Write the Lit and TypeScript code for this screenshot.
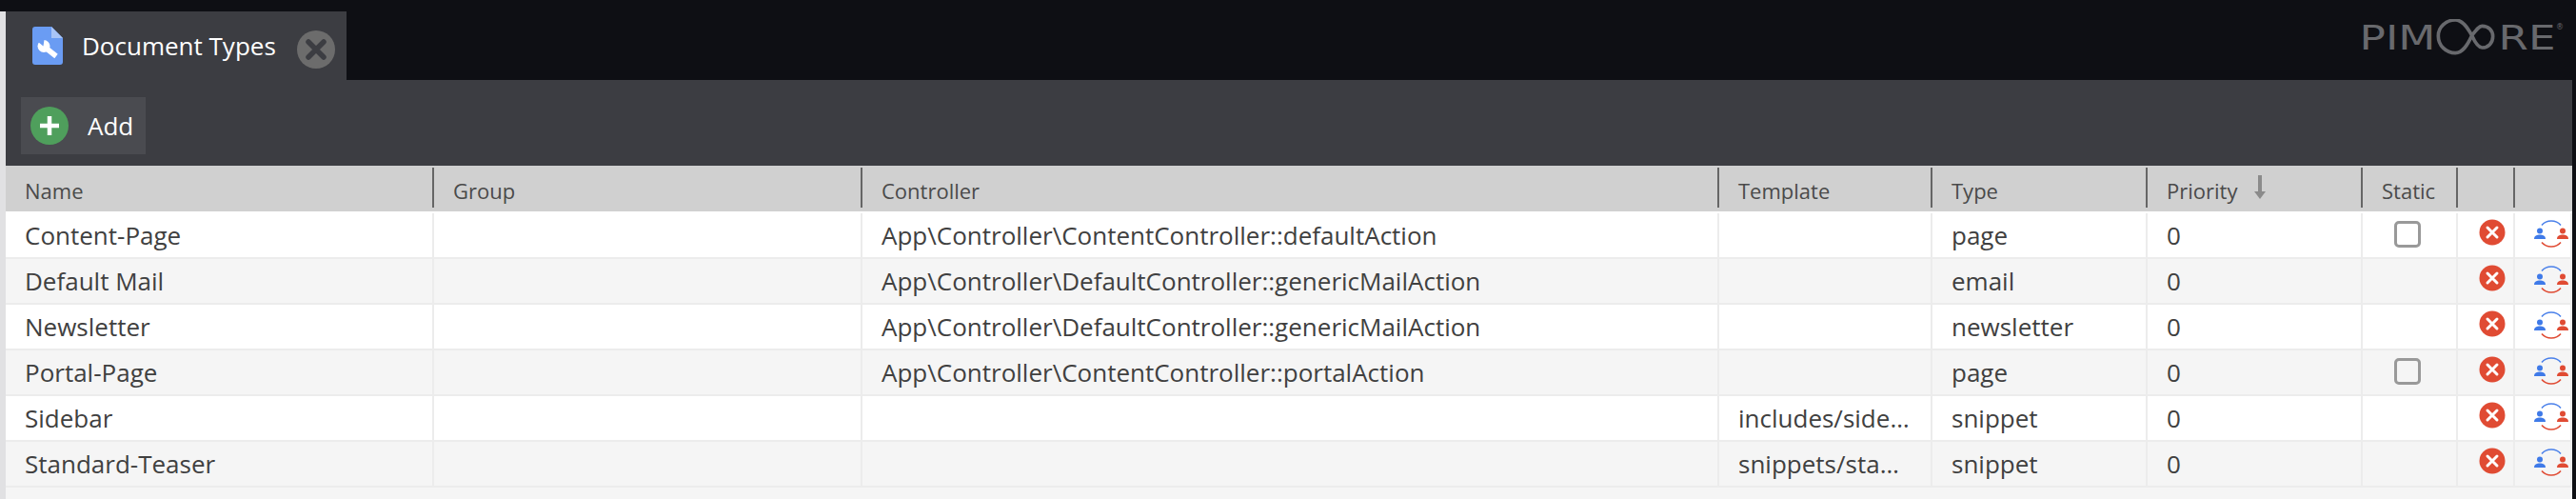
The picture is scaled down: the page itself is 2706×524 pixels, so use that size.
import { LitElement, html, css, svg } from "lit";
import { customElement } from "lit/decorators.js";

const rows = [
  { name: "Content-Page", controller: "App\\Controller\\ContentController::defaultAction", template: "", type: "page", stat: true },
  { name: "Default Mail", controller: "App\\Controller\\DefaultController::genericMailAction", template: "", type: "email", stat: false },
  { name: "Newsletter", controller: "App\\Controller\\DefaultController::genericMailAction", template: "", type: "newsletter", stat: false },
  { name: "Portal-Page", controller: "App\\Controller\\ContentController::portalAction", template: "", type: "page", stat: true },
  { name: "Sidebar", controller: "", template: "includes/sidebar.html", type: "snippet", stat: false },
  { name: "Standard-Teaser", controller: "", template: "snippets/standard-teaser.html", type: "snippet", stat: false },
];

const docIcon = html`<svg class="doc" width="32" height="40" viewBox="0 0 32 40">
  <path d="M3 0H20L32 12V37a3 3 0 0 1-3 3H3a3 3 0 0 1-3-3V3a3 3 0 0 1 3-3z" fill="#6a9cf3"/>
  <path d="M20 0L32 12H20z" fill="#a9c5f7"/>
  <circle cx="12" cy="20.5" r="6.5" fill="#fff"/>
  <path d="M13 21.5L25 31" stroke="#fff" stroke-width="5.5"/>
  <path d="M11.5 20.5L6 16 9 12.5 12.5 13.5z" fill="#6a9cf3"/>
</svg>`;

const closeIcon = html`<svg width="40" height="40" viewBox="0 0 40 40">
  <circle cx="20" cy="20" r="20" fill="#6c6c6c"/>
  <path d="M12 12L28 28M28 12L12 28" stroke="#3c3d42" stroke-width="5.5" stroke-linecap="round"/>
</svg>`;

const plusIcon = html`<svg width="40" height="40" viewBox="0 0 40 40">
  <circle cx="20" cy="20" r="20" fill="#4f9f5c"/>
  <path d="M20 10V30M10 20H30" stroke="#fff" stroke-width="4.5"/>
</svg>`;

const deleteIcon = html`<svg class="del" width="28" height="28" viewBox="0 0 28 28">
  <circle cx="14" cy="14" r="13.5" fill="#e04b33"/>
  <path d="M9 9L19 19M19 9L9 19" stroke="#fff" stroke-width="3" stroke-linecap="round"/>
</svg>`;

const swapIcon = html`<svg class="swap" width="38" height="32" viewBox="0 0 38 32">
  <path d="M8 6.5C13 0.5 23 0.5 28 6.5" fill="none" stroke="#4a80ea" stroke-width="1.6"/>
  <path d="M8 24.5C13 30.5 23 30.5 28 24.5" fill="none" stroke="#e04b33" stroke-width="1.6"/>
  <circle cx="6" cy="12.5" r="3" fill="#3f7ae8"/>
  <path d="M0 21C0 17.5 3 16.5 6 16.5S12 17.5 12 21z" fill="#3f7ae8"/>
  <circle cx="30" cy="12.5" r="3" fill="#e04b33"/>
  <path d="M24 21C24 17.5 27 16.5 30 16.5S36 17.5 36 21z" fill="#e04b33"/>
</svg>`;

const sortIcon = html`<svg class="sort" width="12" height="26" viewBox="0 0 12 26">
  <path d="M4 0H8V17H12L6 25 0 17H4z" fill="#8b8b8b"/>
</svg>`;

const logo = svg`<g fill="#68696d" font-family="DejaVu Sans, sans-serif" font-size="36">
    <text x="2478.5" y="52" textLength="80" lengthAdjust="spacingAndGlyphs">PIM</text>
    <text x="2624.5" y="52" textLength="60" lengthAdjust="spacingAndGlyphs">RE</text>
    <text x="2689" y="31" font-size="8" text-anchor="middle">®</text>
  </g>
  <path transform="translate(2400 0) scale(.3333)" d="M590 112C575 85 560 63 538 63 508 63 484 85 484 113 484 143 508 167 538 167 560 167 575 145 590 112 603 95 612 82 622 82 642 82 656 95 656 115 656 135 642 150 622 150 608 150 598 130 590 112z" fill="none" stroke="#68696d" stroke-width="11"/>`;

@customElement("app-root")
export class AppRoot extends LitElement {
  static styles = css`
    :host { display: block; height: 524px; width: 2706px; font-family: "Open Sans", "Noto Sans", sans-serif; }
    .root { display: flex; height: 524px; padding-top: 12px; box-sizing: border-box; background: #0e0f14; }
    .strip { width: 6px; background: #e1e1e3; flex: none; }
    .main { flex: 1; display: flex; flex-direction: column; min-width: 0; margin-right: 4px; }
    .tabbar { height: 72px; flex: none; display: flex; justify-content: space-between; margin-right: -4px; }
    .tab { width: 358px; background: #3c3d42; display: flex; align-items: flex-start; box-sizing: border-box; padding: 16px 0 0 28px; color: #fff; font-size: 26px; }
    .doc { flex: none; }
    .tab .title { margin-left: 20px; line-height: 36px; margin-top: 2px; }
    .tab .x { margin-left: auto; margin-right: 12px; margin-top: 4px; height: 40px; }
    .logo { flex: none; margin: 8px 12px 0 0; }
    .toolbar { height: 90px; flex: none; background: #3c3d42; padding: 18px 0 0 16px; box-sizing: border-box; }
    .add { display: inline-flex; align-items: center; width: 131px; height: 60px; background: #4a4b50; box-sizing: border-box; padding-left: 10px; color: #fff; font-size: 26px; }
    .add span { margin-left: 20px; }
    .add svg { flex: none; }
    .thead, .tr { display: grid; grid-template-columns: 450px 450px 900px 224px 226px 226px 100px 60px 60px; }
    .thead { height: 48px; flex: none; box-sizing: border-box; background: #d0d0d0; padding: 2px 0 4px; color: #4a4a4a; font-size: 22px; }
    .th { border-right: 2px solid #666; padding: 6px 0 0 20px; box-sizing: border-box; height: 42px; display: flex; align-items: center; gap: 18px; line-height: 30px; min-width: 0; }
    .th:last-child { border-right: none; }
    .sort { margin-top: -6px; flex: none; }
    .body { flex: 1; background: #f5f5f5; }
    .tbody { padding-top: 2px; background: #fff; }
    .tr { height: 48px; box-sizing: border-box; border-bottom: 2px solid #ececec; background: #fff; color: #404040; font-size: 26px; }
    .tr.alt { background: #f5f5f5; }
    .td { border-right: 2px solid #ececec; padding: 0 20px; line-height: 46px; white-space: nowrap; overflow: hidden; text-overflow: ellipsis; min-width: 0; }
    .td.icon { padding: 0; display: flex; }
    .check { width: 22px; height: 22px; border: 3px solid #999; border-radius: 5px; margin: 8px 0 0 33px; }
    .del { margin: 6px 0 0 22px; flex: none; }
    .swap { margin: 6px 0 0 20px; flex: none; }
  `;

  render() {
    return html`<div class="root">
      <div class="strip"></div>
      <div class="main">
        <div class="tabbar">
          <div class="tab">${docIcon}<span class="title">Document Types</span><span class="x">${closeIcon}</span></div>
          <svg class="logo" width="216" height="40" viewBox="2478 20 216 40">${logo}</svg>
        </div>
        <div class="toolbar"><div class="add">${plusIcon}<span>Add</span></div></div>
        <div class="thead">
          ${["Name", "Group", "Controller", "Template", "Type"].map((t) => html`<div class="th">${t}</div>`)}
          <div class="th">Priority ${sortIcon}</div>
          <div class="th">Static</div>
          <div class="th"></div>
          <div class="th"></div>
        </div>
        <div class="body">
          <div class="tbody">
            ${rows.map(
              (r, i) => html`<div class="tr ${i % 2 ? "alt" : ""}">
                <div class="td">${r.name}</div>
                <div class="td"></div>
                <div class="td">${r.controller}</div>
                <div class="td">${r.template}</div>
                <div class="td">${r.type}</div>
                <div class="td">0</div>
                <div class="td icon">${r.stat ? html`<div class="check"></div>` : ""}</div>
                <div class="td icon">${deleteIcon}</div>
                <div class="td icon">${swapIcon}</div>
              </div>`
            )}
          </div>
        </div>
      </div>
    </div>`;
  }
}
